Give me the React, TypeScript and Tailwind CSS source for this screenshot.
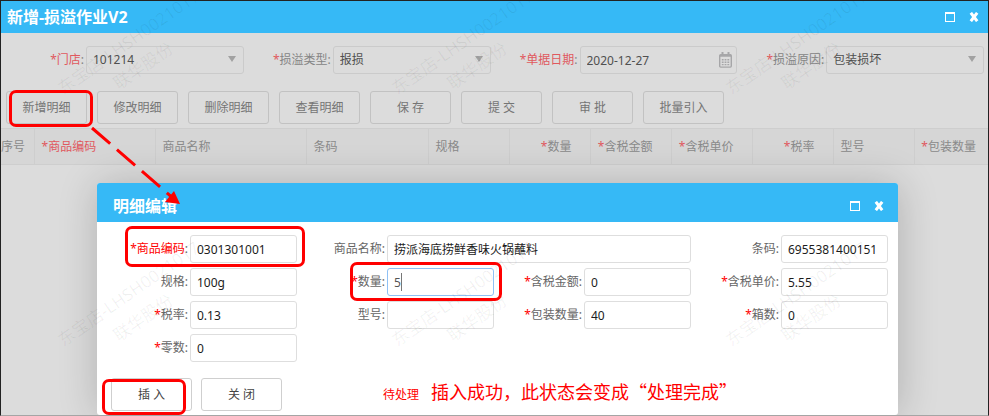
import type { ReactNode } from "react";

type FieldProps = {
  id: string;
  label: string;
  value?: string;
  required?: boolean;
  wide?: boolean;
  highlight?: boolean;
  active?: boolean;
};

const buttons = ["新增明细", "修改明细", "删除明细", "查看明细", "保 存", "提 交", "审 批", "批量引入"];

const columns = [
  { name: "序号", className: "w-[33px]" },
  { name: "商品编码", className: "w-[121px] pl-[7px] text-[#e0595e]", required: true },
  { name: "商品名称", className: "w-[151px] pl-[7px]" },
  { name: "条码", className: "w-[122px] pl-[7px]" },
  { name: "规格", className: "w-[81px] pl-[7px]" },
  { name: "数量", className: "w-[81px] pr-[18px] text-right", required: true },
  { name: "含税金额", className: "w-[81px] pr-[18px] text-right", required: true },
  { name: "含税单价", className: "w-[81px] pr-[18px] text-right", required: true },
  { name: "税率", className: "w-[81px] pr-[18px] text-right", required: true },
  { name: "型号", className: "w-[81px] pl-[7px]" },
  { name: "包装数量", className: "pr-[12px] text-right", required: true },
];

const detailFields: FieldProps[] = [
  { id: "code", label: "商品编码", value: "0301301001", required: true, highlight: true },
  { id: "name", label: "商品名称", value: "捞派海底捞鲜香味火锅蘸料", wide: true },
  { id: "barcode", label: "条码", value: "6955381400151" },
  { id: "spec", label: "规格", value: "100g" },
  { id: "qty", label: "数量", value: "5", required: true, active: true },
  { id: "amount", label: "含税金额", value: "0", required: true },
  { id: "price", label: "含税单价", value: "5.55", required: true },
  { id: "rate", label: "税率", value: "0.13", required: true },
  { id: "model", label: "型号", value: "" },
  { id: "packQty", label: "包装数量", value: "40", required: true },
  { id: "boxes", label: "箱数", value: "0", required: true },
  { id: "odd", label: "零数", value: "0", required: true },
];

function WindowControls() {
  return (
    <div className="flex items-center gap-[13px]">
      <button type="button" aria-label="最大化" className="flex">
        <svg width="12" height="10" viewBox="0 0 12 10" fill="none">
          <rect x="1.5" y="0.5" width="9" height="9" stroke="#fff" strokeWidth="1" />
          <path d="M1 1h10" stroke="#fff" strokeWidth="2" />
        </svg>
      </button>
      <button type="button" aria-label="关闭窗口" className="flex">
        <svg width="10" height="10" viewBox="0 0 10 10">
          <path d="M1.8 0.8l6.4 8.4M8.2 0.8L1.8 9.2" stroke="#fff" strokeWidth="3" />
        </svg>
      </button>
    </div>
  );
}

function FilterField({ id, label, red, children }: { id: string; label: string; red?: boolean; children: ReactNode }) {
  return (
    <div className="flex items-center pr-1">
      <label htmlFor={id} className="w-[85px] shrink-0 pr-[2px] text-right text-[#858585]">
        <span className="text-[#e0595e]">*</span>
        <span className={red ? "text-[#e0595e]" : ""}>{label}</span>:
      </label>
      <div className="relative min-w-0 flex-1">{children}</div>
    </div>
  );
}

function FilterSelect({ id, value }: { id: string; value: string }) {
  return (
    <>
      <select
        id={id}
        className="block h-7 w-full appearance-none rounded-[3px] border border-[#cbcbcb] bg-transparent pl-[6px] text-[#505050] outline-none"
      >
        <option>{value}</option>
      </select>
      <svg className="pointer-events-none absolute right-[8px] top-[10px]" width="8" height="6" viewBox="0 0 8 6">
        <path d="M0 0h8L4 6z" fill="#a2a2a2" />
      </svg>
    </>
  );
}

function CalendarIcon() {
  return (
    <svg className="pointer-events-none absolute right-[5px] top-[6px]" width="13" height="16" viewBox="0 0 13 16" fill="none">
      <rect x="0.7" y="2.7" width="11.6" height="12.4" rx="1" stroke="#a6a6a8" strokeWidth="1.4" />
      <path d="M1 3.8h11M3.5 0v4M9.5 0v4" stroke="#a6a6a8" strokeWidth="2" />
      <path d="M2.8 7.8h8M2.8 10.2h8M2.8 12.6h8" stroke="#a6a6a8" strokeWidth="1.4" strokeDasharray="1.8 1" />
    </svg>
  );
}

function DetailField({ id, label, value, required, wide, highlight, active }: FieldProps) {
  return (
    <div className={wide ? "col-span-2 flex items-center" : "flex items-center"}>
      <label htmlFor={id} className="w-[90px] shrink-0 pr-[2px] text-right text-[#666]">
        {required && <span className="text-[#f00]">*</span>}
        <span className={highlight ? "text-[#f00]" : ""}>{label}</span>:
      </label>
      <div className="relative min-w-0 flex-1">
        <input
          id={id}
          type="text"
          defaultValue={value}
          className={
            active
              ? "block h-7 w-full rounded-[3px] border border-[#8fc1f5] bg-white pl-[6px] text-[#555] outline-none"
              : "block h-7 w-full rounded-[3px] border border-[#dedede] bg-white pl-[6px] text-[#1c1c1c] outline-none"
          }
        />
        {active && <span className="absolute left-[14px] top-[5px] h-[18px] w-px bg-[#777]" />}
      </div>
    </div>
  );
}

function Watermark({ className }: { className: string }) {
  return (
    <div className={`absolute w-[176px] -rotate-[35deg] text-[17px] leading-7 text-black/[0.06] ${className}`}>
      <p className="whitespace-nowrap">东宝店-LHSH0021017</p>
      <p className="pl-12">联华股份</p>
    </div>
  );
}

function Annotations() {
  return (
    <div className="pointer-events-none absolute inset-0 overflow-hidden" aria-hidden="true">
      <Watermark className="left-[51px] top-[22px]" />
      <Watermark className="left-[385px] top-[22px]" />
      <Watermark className="left-[719px] top-[22px]" />
      <Watermark className="left-[51px] top-[274px]" />
      <Watermark className="left-[385px] top-[274px]" />
      <Watermark className="left-[719px] top-[274px]" />
      <div className="absolute left-[8px] top-[89px] h-[37px] w-[84px] rounded-[7px] border-3 border-[#f00]" />
      <div className="absolute left-[124px] top-[225px] h-[41px] w-[180px] rounded-[7px] border-3 border-[#f00]" />
      <div className="absolute left-[349px] top-[261px] h-[39px] w-[152px] rounded-[7px] border-3 border-[#f00]" />
      <div className="absolute left-[101px] top-[378px] h-[36px] w-[84px] rounded-[7px] border-3 border-[#f00]" />
      <svg className="absolute left-[90px] top-[125px]" width="92" height="82" viewBox="0 0 92 82">
        <path d="M1 2L83 73" stroke="#f00" strokeWidth="3" strokeDasharray="24 9" />
        <path d="M89 78L74 76L83 65z" fill="#f00" />
      </svg>
    </div>
  );
}

export default function App() {
  return (
    <div className="relative flex min-h-screen flex-col overflow-hidden border border-[#222] border-b-[#a5a5a5] bg-[#dcdcdc] font-['Noto_Sans','Noto_Sans_CJK_SC',sans-serif] text-xs">
      <header className="flex h-8 shrink-0 items-center justify-between bg-[#36b9f6] pl-[6px] pr-[9px]">
        <h1 className="text-base font-bold text-white">新增-损溢作业V2</h1>
        <WindowControls />
      </header>

      <form className="grid grid-cols-4 pt-[13px]">
        <FilterField id="store" label="门店" red>
          <FilterSelect id="store" value="101214" />
        </FilterField>
        <FilterField id="type" label="损溢类型">
          <FilterSelect id="type" value="报损" />
        </FilterField>
        <FilterField id="date" label="单据日期" red>
          <input
            id="date"
            type="text"
            defaultValue="2020-12-27"
            className="block h-7 w-full rounded-[3px] border border-[#cbcbcb] bg-transparent pl-[6px] text-[#505050] outline-none"
          />
          <CalendarIcon />
        </FilterField>
        <FilterField id="reason" label="损溢原因">
          <FilterSelect id="reason" value="包装损坏" />
        </FilterField>
      </form>

      <div className="flex gap-[10px] pb-1 pl-[5px] pt-[17px]">
        {buttons.map((name) => (
          <button key={name} type="button" className="h-[33px] w-[81px] rounded-[3px] border border-[#c2c2c2] text-[#757575]">
            {name}
          </button>
        ))}
      </div>

      <table className="w-full table-fixed border-y border-[#cecece] bg-[#d6d6d6]">
        <thead>
          <tr className="h-9">
            {columns.map((col) => (
              <th
                key={col.name}
                className={`whitespace-nowrap border-r border-[#cecece] p-0 text-left font-normal text-[#8a8a8a] last:border-r-0 ${col.className}`}
              >
                {col.required && <span className="text-[#e0595e]">*</span>}
                {col.name}
              </th>
            ))}
          </tr>
        </thead>
      </table>

      <main className="flex flex-1 flex-col pl-[96px] pr-[90px] pt-[18px]">
        <section className="flex flex-1 flex-col rounded-[3px] bg-white shadow-[1px_1px_40px_rgba(0,0,0,0.2)]">
          <div className="flex h-[39px] items-center justify-between rounded-t-[3px] bg-[#36b9f6] pl-4 pr-[14px] pt-[6px]">
            <h2 className="text-base font-bold text-white">明细编辑</h2>
            <WindowControls />
          </div>
          <div className="grid grid-cols-4 gap-y-[5px] pl-[3px] pr-[10px] pt-[13px]">
            {detailFields.map((field) => (
              <DetailField key={field.id} {...field} />
            ))}
          </div>
          <div className="flex items-center pb-[3px] pl-[14px] pt-4">
            <button type="button" className="h-[33px] w-[81px] rounded-[3px] border border-[#cfcfcf] text-[#444]">
              插 入
            </button>
            <button type="button" className="ml-[9px] h-[33px] w-[81px] rounded-[3px] border border-[#cfcfcf] text-[#444]">
              关 闭
            </button>
            <p className="ml-[101px] flex items-center gap-3 whitespace-nowrap text-[#f00]">
              <span>待处理</span>
              <span className="pb-2 font-['Noto_Sans_CJK_SC',sans-serif] text-lg leading-6">
                插入成功，此状态会变成“处理完成”
              </span>
            </p>
          </div>
        </section>
      </main>

      <Annotations />
    </div>
  );
}
